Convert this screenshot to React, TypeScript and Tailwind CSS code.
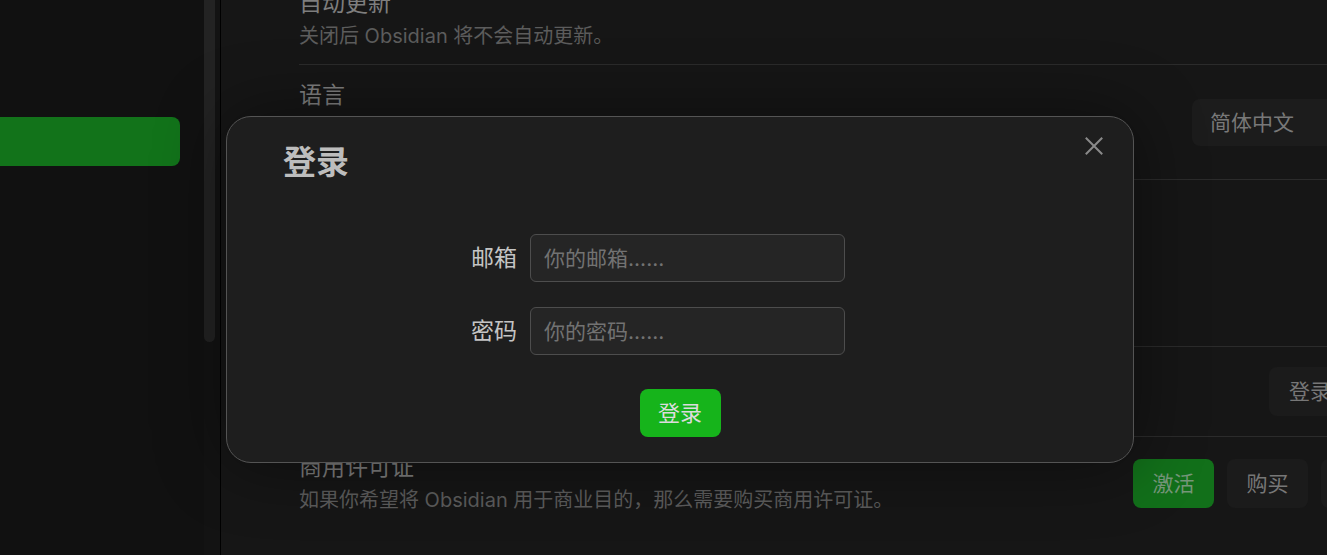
import React from "react";

function Row({
  className,
  title,
  desc,
  children,
}: {
  className: string;
  title?: string;
  desc?: string;
  children?: React.ReactNode;
}) {
  return (
    <div className={`ml-[78px] flex justify-between border-t border-[#2b2b2b] ${className}`}>
      <div className="flex flex-col gap-[4px]">
        {title && <div className="text-[23px] leading-[30px] text-[#7e7e7e]">{title}</div>}
        {desc && <div className="text-[20px] leading-[28px] text-[#5c5c5c]">{desc}</div>}
      </div>
      {children}
    </div>
  );
}

export default function App() {
  return (
    <div className="relative flex h-[555px] w-full overflow-hidden bg-[#161616] font-[Inter,'Noto_Sans_CJK_SC',sans-serif]">
      {/* Sidebar */}
      <aside className="flex h-full w-[220px] shrink-0 bg-[#111111]">
        <div className="flex-1 pt-[117px] pr-[24px]">
          <div className="h-[49px] rounded-r-[8px] bg-[#12731a]" />
        </div>
        <div className="w-[16px] bg-[#131313]">
          <div className="h-[342px] w-[11px] rounded-b-full bg-[#232323]" />
        </div>
      </aside>
      <div className="w-px shrink-0 bg-black" />

      {/* Main settings */}
      <main className="flex-1 overflow-hidden">
        <div className="mt-[-26px] w-[1130px]">
          <div className="ml-[78px] flex h-[90px] flex-col justify-center gap-[4px]">
            <div className="text-[23px] leading-[30px] text-[#7e7e7e]">自动更新</div>
            <div className="text-[20px] leading-[28px] text-[#5c5c5c]">关闭后 Obsidian 将不会自动更新。</div>
          </div>
          <Row className="h-[115px] items-start pt-[15px]" title="语言" desc="更改界面语言。">
            <div className="mt-[19px] flex h-[47px] w-[159px] items-center rounded-[8px] bg-[#1c1c1c] pl-[18px] text-[21px] text-[#787878]">
              简体中文
            </div>
          </Row>
          <div className="ml-[78px] h-[167px] border-t border-[#2b2b2b]" />
          <Row className="h-[90px] items-center" title="账户" desc="登录你的 Obsidian 账户。">
            <button className="h-[49px] w-[82px] rounded-[8px] bg-[#1b1b1b] pr-[20px] text-right text-[21px] text-[#777777]">
              登录
            </button>
          </Row>
          <Row
            className="h-[90px] items-start pt-[15px]"
            title="商用许可证"
            desc="如果你希望将 Obsidian 用于商业目的，那么需要购买商用许可证。"
          >
            <div className="-mr-[51px] mt-[7px] flex gap-[13px]">
              <button className="h-[49px] w-[81px] rounded-[8px] bg-[#12701a] text-[21px] text-[#76977a]">激活</button>
              <button className="h-[49px] w-[81px] rounded-[8px] bg-[#1b1b1b] text-[21px] text-[#777777]">购买</button>
              <button className="h-[49px] w-[81px] rounded-[8px] bg-[#1b1b1b] text-[21px] text-[#777777]"></button>
            </div>
          </Row>
        </div>
      </main>

      {/* Modal */}
      <div className="absolute left-[226px] top-[116px] h-[347px] w-[908px] rounded-[25px] border border-[#545454] bg-[#1e1e1e] pb-[25px] pt-[25px] shadow-[0_0_70px_rgba(0,0,0,0.45)]">
        <button className="absolute right-[30px] top-[19px] flex h-[19px] w-[19px] items-center justify-center text-[#8a8a8a]">
          <svg width="18" height="18" viewBox="0 0 18 18" fill="none" stroke="currentColor" strokeWidth="2" strokeLinecap="square">
            <path d="M1.5 1.5L16.5 16.5M16.5 1.5L1.5 16.5" />
          </svg>
        </button>
        <div className="pl-[56px] text-[33px] font-bold leading-[40px] text-[#bdbdbd]">登录</div>
        <div className="mt-[52px] flex flex-col gap-[25px]">
          <div className="flex items-center">
            <label className="w-[290px] text-right text-[23px] font-normal text-[#c4c4c4]">邮箱</label>
            <input
              className="ml-[13px] h-[48px] w-[315px] rounded-[6px] border border-[#4d4d4d] bg-[#252525] px-[13px] text-[21px] text-[#cccccc] outline-none placeholder:text-[#727272]"
              placeholder="你的邮箱......"
            />
          </div>
          <div className="flex items-center">
            <label className="w-[290px] text-right text-[23px] font-normal text-[#c4c4c4]">密码</label>
            <input
              type="password"
              className="ml-[13px] h-[48px] w-[315px] rounded-[6px] border border-[#4d4d4d] bg-[#252525] px-[13px] text-[21px] text-[#cccccc] outline-none placeholder:text-[#727272]"
              placeholder="你的密码......"
            />
          </div>
        </div>
        <div className="mt-[34px] flex justify-center">
          <button className="h-[48px] w-[81px] rounded-[8px] bg-[#16b41b] text-[22px] text-[#dcdcdc]">登录</button>
        </div>
      </div>
    </div>
  );
}
